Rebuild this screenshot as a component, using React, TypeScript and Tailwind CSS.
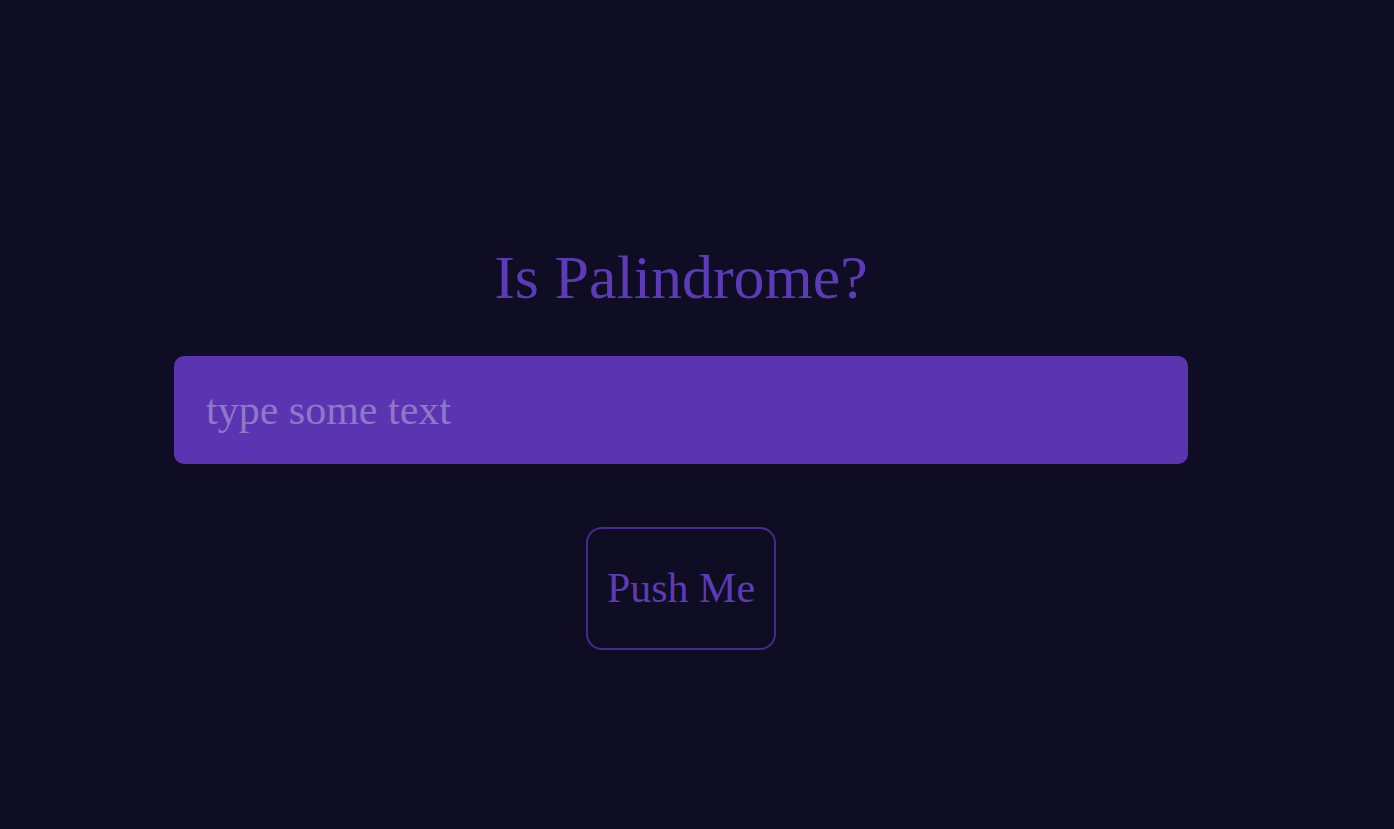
export default function App() {
  return (
    <div className="min-h-[829px] w-full bg-[#0e0d23] font-['Liberation_Serif',serif]">
      <div className="flex w-[1362px] flex-col items-center pt-[245px]">
        <h1 className="text-[62px] leading-[64px] text-[#5d3bb6]">Is Palindrome?</h1>

        <input
          type="text"
          placeholder="type some text"
          className="mt-[47px] h-[108px] w-[1014px] rounded-[10px] bg-[#5b35b1] px-8 text-[42px] text-white outline-none placeholder:text-[#8f78c7]"
        />

        <button className="mt-[63px] h-[123px] rounded-2xl border-2 border-[#48298f] px-[19px] text-[42px] text-[#5d3bb6]">
          Push Me
        </button>
      </div>
    </div>
  );
}
